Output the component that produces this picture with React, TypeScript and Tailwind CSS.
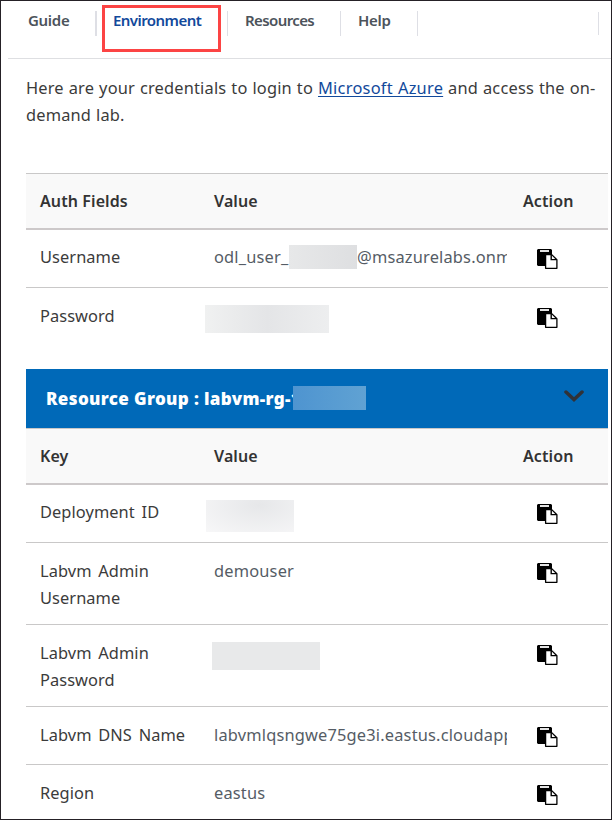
import type { ReactNode } from "react";

function PasteIcon() {
  return (
    <svg width="21" height="20" viewBox="0 0 21 20" className="block" aria-hidden="true">
      <path d="M1 0H14L15 1V5H9.5L8 6.5V17H1L0 16V1Z" fill="#000" />
      <rect x="3" y="1" width="9" height="2" fill="#e4e4e4" />
      <path d="M8.6 5.6H14.7L19.9 10.8V19.3H8.6Z" fill="#fff" stroke="#000" strokeWidth="1.3" strokeLinejoin="round" />
      <path d="M14.2 5.8V10.6H19.8" fill="none" stroke="#000" strokeWidth="1.4" />
    </svg>
  );
}

function HeadRow({ label }: { label: string }) {
  return (
    <div className="flex h-[57px] border-t border-b-2 border-t-[#c9c8c8] border-b-[#cdc9ca] bg-[#f9f9f9] pl-3.5 pt-3.5 font-semibold leading-[27px] tracking-[0.1px] text-[#333]">
      <div className="w-[174px]">{label}</div>
      <div className="w-[309px]">Value</div>
      <div>Action</div>
    </div>
  );
}

function Row({ label, children, size, first }: { label: ReactNode; children?: ReactNode; size: string; first?: boolean }) {
  return (
    <div className={`flex pl-3.5 text-[16.4px] ${first ? "pt-[13px]" : "pt-3.5"} ${size}`}>
      <div className="w-[165px] shrink-0 leading-[27px] tracking-[0.07px] text-[#3b3b3b] [word-spacing:2.4px]">{label}</div>
      <div className="h-[37px] w-[302px] shrink-0 overflow-hidden whitespace-nowrap pl-[9px] leading-[27px] tracking-[0.18px] text-[#555c65]">
        {children}
      </div>
      <div className="pl-[30px] pt-1.5">
        <PasteIcon />
      </div>
    </div>
  );
}

const line = "border-b border-[#c9c8c8]";

export default function App() {
  return (
    <main className="h-[820px] w-[612px] overflow-hidden border border-[#252126] bg-white font-['Noto_Sans','Open_Sans',sans-serif] text-[16px]">
      <nav className="ml-[7px] flex h-[58px] border-b border-[#dedfe2] text-[15px] font-semibold leading-[22px] text-[#4c535b]">
        <div className="mt-[10px] h-[25px] w-[89px] border-r-2 border-[#dedfe5] pl-5 tracking-[-0.3px]">
          <div className="-mt-0.5">Guide</div>
        </div>
        <div className="ml-[5px] mt-1 h-[47px] w-[119px] border-3 border-[#fc4444] pl-[8px] pt-px tracking-[-0.55px] text-[#12499b]">
          Environment
        </div>
        <div className="ml-[6px] mt-[10px] h-[25px] w-[114px] border-x border-[#dedfe5] pl-[17px] tracking-[-0.6px]">
          <div className="-mt-0.5">Resources</div>
        </div>
        <div className="mt-[10px] h-[25px] w-[77px] border-r border-[#dedfe5] pl-[17px] tracking-[-0.3px]">
          <div className="-mt-0.5">Help</div>
        </div>
        <div className="ml-auto mr-3 mt-[11px] h-[23px] border-r border-[#dedfe5]" />
      </nav>

      <p className="ml-[25px] mt-[15px] h-[99px] whitespace-nowrap text-[16.4px] leading-[27px] tracking-[0.18px] text-[#3b3b3b] [word-spacing:0.5px]">
        Here are your credentials to login to{" "}
        <a href="#" className="tracking-[0.25px] text-[#12499b] underline underline-offset-2">Microsoft Azure</a> and access the on-
        <br />
        demand lab.
      </p>

      <section className="ml-[25px] w-[582px]">
        <HeadRow label="Auth Fields" />
        <Row label="Username" size={`h-[58px] ${line}`} first>
          <div className="flex">
            <span className="w-[75px] shrink-0 tracking-[0.18px]">odl_user_</span>
            <span className="mt-0.5 h-6 w-[68px] shrink-0 bg-linear-to-r from-[#e7e8e9] to-[#dedfe1]" />
            <span>@msazurelabs.onm</span>
          </div>
        </Row>
        <Row label="Password" size="h-[81px]">
          <div className="-ml-[9px] mt-[3px] h-7 w-[124px] bg-linear-to-r from-[#f0f1f1] via-[#e4e5e7] to-[#edeeef]" />
        </Row>
      </section>

      <section className="ml-[25px] w-[582px]">
        <header className="flex h-[59px] items-center bg-[#0069b8] pl-5 pr-6 text-[17px] font-black text-white">
          <span className="w-[247px] overflow-hidden whitespace-nowrap tracking-[0.36px]">Resource Group : labvm-rg-1</span>
          <span className="-mt-px h-6 w-[73px] bg-linear-to-r from-[#4e94d0] to-[#60a2d3]" />
          <svg className="mb-1.5 ml-auto" width="20" height="14" viewBox="0 0 20 14" fill="none" stroke="#303238" strokeWidth="3.5" strokeLinecap="round">
            <path d="M2 3L10 10.5L18 3" />
          </svg>
        </header>
        <HeadRow label="Key" />
        <Row label="Deployment ID" size={`h-[58px] ${line}`} first>
          <div className="-ml-2 mt-0.5 h-8 w-[88px] bg-radial-[at_60%_15%] from-[#e6e7e9] to-[#f7f7f8]" />
        </Row>
        <Row label={<>Labvm Admin<br />Username</>} size={`h-[82px] ${line}`}>demouser</Row>
        <Row label={<>Labvm Admin<br />Password</>} size={`h-[82px] ${line}`}>
          <div className="-ml-0.5 mt-[3px] h-7 w-[108px] bg-[#e8e9ea]" />
        </Row>
        <Row label="Labvm DNS Name" size={`h-[58px] ${line}`}>labvmlqsngwe75ge3i.eastus.cloudapp</Row>
        <Row label="Region" size="h-[54px]">eastus</Row>
      </section>
    </main>
  );
}
